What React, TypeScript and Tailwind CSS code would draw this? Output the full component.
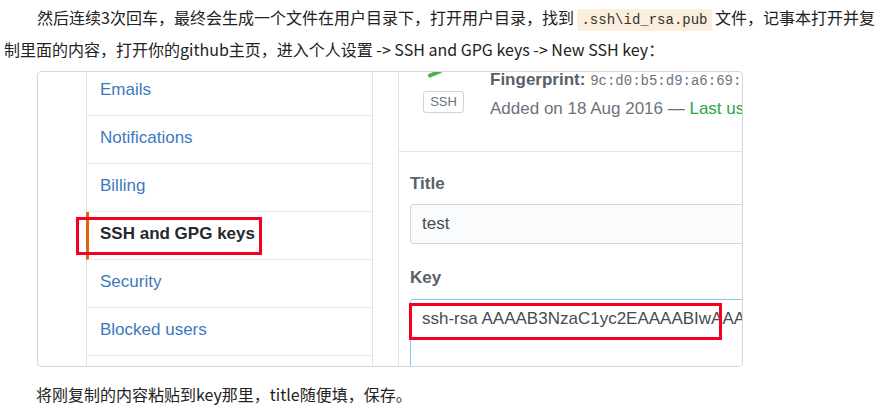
const cjk = "font-['Noto_Sans_CJK_SC',sans-serif]";
const ui = "font-['Liberation_Sans','Noto_Sans',sans-serif]";

const menu = ["Emails", "Notifications", "Billing", "SSH and GPG keys", "Security", "Blocked users"];

function Menu() {
  return (
    <div className="w-[287px] border-x border-[#e1e4e8] -mt-[4px] shrink-0">
      {menu.map((item) =>
        item === "SSH and GPG keys" ? (
          <div key={item} className="h-[48px] flex items-center pb-[3px] border-b border-[#e8eaec] border-l-[3px] border-l-[#e36209] -ml-px pl-[11px] text-[17px] font-bold text-[#24292e]">
            {item}
          </div>
        ) : (
          <div key={item} className="h-[48px] flex items-center pb-[3px] border-b border-[#e8eaec] pl-[13px] text-[17px] text-[#4078c0]">
            {item}
          </div>
        )
      )}
    </div>
  );
}

function KeyPanel() {
  return (
    <div className="flex-1 border-l border-[#e1e4e8] overflow-hidden">
      {/* existing key, cut off at the top */}
      <div className="h-[80px] border-b border-[#e1e4e8] flex pl-[24px] gap-[26px]">
        <div className="w-[41px] shrink-0 flex flex-col items-start">
          <svg width="20" height="8" viewBox="0 0 20 8" className="ml-[4px] -mt-[2px]">
            <path d="M3 5.5 L13 1.5" stroke="#4cae4c" strokeWidth="4" strokeLinecap="round" />
          </svg>
          <div className="mt-[13px] w-[41px] h-[22px] border border-[#d1d5da] rounded-[3px] flex items-center justify-center text-[13px] text-[#6a737d]">
            SSH
          </div>
        </div>
        <div className="-mt-[6px] leading-[28px] whitespace-nowrap text-[#6a737d]">
          <div className="text-[17px]">
            <span className="font-bold text-[#586069]">Fingerprint:</span>{" "}
            <span className="font-['Liberation_Mono',monospace] text-[14px]">9c:d0:b5:d9:a6:69:1</span>
          </div>
          <div className="text-[17px]">
            Added on 18 Aug 2016 — <span className="text-[#28a745]">Last used</span>
          </div>
        </div>
      </div>
      {/* new key form */}
      <div className="pl-[11px] pt-[20px]">
        <div className="leading-[24px] text-[17px] font-bold text-[#586069]">Title</div>
        <div className="mt-[8px] w-[420px] h-[40px] border border-[#d1d5da] rounded-[3px] bg-[#fafbfc] flex items-center pl-[11px] text-[17px] text-[#444d56]">
          test
        </div>
        <div className="mt-[22px] leading-[24px] text-[17px] font-bold text-[#586069]">Key</div>
        <div className="mt-[9px] w-[420px] h-[90px] border border-[#8fc3ef] rounded-[3px] bg-white pl-[11px] pt-[6px] text-[17px] text-[#444d56] whitespace-nowrap">
          ssh-rsa AAAAB3NzaC1yc2EAAAABIwAAAC
        </div>
      </div>
    </div>
  );
}

export default function App() {
  return (
    <div className={`w-[894px] h-[412px] bg-white overflow-hidden text-[#222] ${cjk}`}>
      <p className="pt-[3px] pl-[4px] text-[16px] leading-[29px] whitespace-nowrap">
        <span className="pl-[33px]">然后连续3次回车，最终会生成一个文件在用户目录下，打开用户目录，找到 </span>
        <code className="bg-[#fbeedc] rounded-[3px] px-[4px] py-[3px] font-['Liberation_Mono',monospace] text-[14px] text-[#333]">
          .ssh\id_rsa.pub
        </code>
        <span> 文件，记事本打开并复</span>
        <br />
        制里面的内容，打开你的github主页，进入个人设置 -&gt; SSH and GPG keys -&gt; New SSH key：
      </p>

      <div className={`relative ml-[37px] mt-[7px] w-[706px] h-[296px] border border-[#d6d6d6] rounded-[4px] overflow-hidden flex ${ui}`}>
        <div className="w-[48px] shrink-0" />
        <Menu />
        <div className="w-[25px] shrink-0" />
        <KeyPanel />

        {/* annotation boxes */}
        <div className="absolute left-[38px] top-[145px] w-[186px] h-[38px] border-[3px] border-[#f5001e]" />
        <div className="absolute left-[371px] top-[231px] w-[313px] h-[37px] border-[3px] border-[#f5001e]" />
      </div>

      <p className="mt-[13px] pl-[36px] text-[16px] leading-[29px]">将刚复制的内容粘贴到key那里，title随便填，保存。</p>
    </div>
  );
}
